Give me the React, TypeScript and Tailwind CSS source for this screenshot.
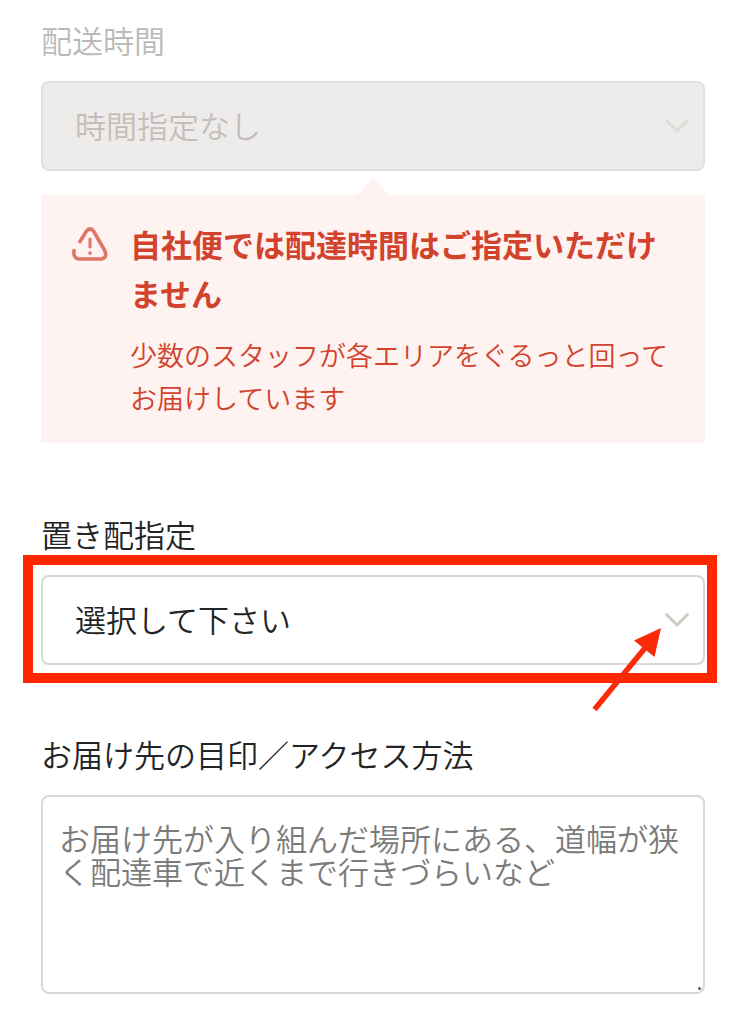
import type { ReactNode, SelectHTMLAttributes } from "react"

function Chevron({ className }: { className: string }) {
  return (
    <svg viewBox="0 0 28 18" className={`pointer-events-none absolute top-1/2 right-[14px] h-[18px] w-7 -translate-y-1/2 ${className}`} aria-hidden="true">
      <path d="M3.5 3.5 L14 14 L24.5 3.5" fill="none" stroke="currentColor" strokeWidth="3" strokeLinecap="round" strokeLinejoin="round" />
    </svg>
  )
}

function FieldLabel({ htmlFor, className = "", children }: { htmlFor: string; className?: string; children: ReactNode }) {
  return (
    <label htmlFor={htmlFor} className={`mb-5 block text-[31px] leading-[42px] font-[350] ${className}`}>
      {children}
    </label>
  )
}

function SelectBox({ option, chevron, className, ...props }: { option: string; chevron: string } & SelectHTMLAttributes<HTMLSelectElement>) {
  return (
    <div className="relative">
      <select
        className={`block h-[90px] w-full appearance-none rounded-lg border-2 pr-14 pb-0.5 pl-8 text-[31px] font-[350] opacity-100 ${className}`}
        {...props}
      >
        <option>{option}</option>
      </select>
      <Chevron className={chevron} />
    </div>
  )
}

function WarningIcon() {
  return (
    <svg viewBox="0 0 36 34" className="mt-2 h-[34px] w-9 shrink-0 text-[#e07468]" fill="none" stroke="currentColor" strokeWidth="3.6" strokeLinecap="round" strokeLinejoin="round" aria-hidden="true">
      <path d="M8 14.5 L14.3 4.4 Q18 -0.6 21.7 4.4 L32.7 23.5 Q36 31.5 28.5 32 L7 32 Q1 31.5 2 23.5" />
      <path d="M18 12 V20" strokeWidth="3" />
      <path d="M18 26 V26.2" strokeWidth="3.4" />
    </svg>
  )
}

export default function App() {
  return (
    <main lang="ja" className="bg-white pt-[19px] pr-[29px] pb-[29px] pl-[41px] font-['Noto_Sans_CJK_JP',sans-serif] text-[#222426]">
      {/* Delivery time */}
      <section>
        <FieldLabel htmlFor="delivery-time" className="text-[#bcbab9]">配送時間</FieldLabel>
        <SelectBox
          id="delivery-time"
          option="時間指定なし"
          chevron="text-[#dbded8]"
          className="border-[#e1e0dd] bg-[#eeecea] text-[#c4bebb]"
          disabled
        />

        <div role="alert" className="relative mt-6 flex gap-[22px] bg-[#fef3f1] py-6 pr-6 pl-[31px]">
          <svg viewBox="0 0 32 18" className="absolute bottom-full left-1/2 h-[18px] w-8 -translate-x-1/2 text-[#fef3f1]" aria-hidden="true">
            <path d="M0 18 L16 0 L32 18 Z" fill="currentColor" />
          </svg>
          <WarningIcon />
          <div className="min-w-0 text-[#d2432d]">
            <p className="text-[31px] leading-[49px] font-bold">自社便では配達時間はご指定いただけません</p>
            <p className="mt-4 text-[27px] leading-[43px] font-[350]">少数のスタッフが各エリアをぐるっと回ってお届けしています</p>
          </div>
        </div>
      </section>

      {/* Drop-off place */}
      <section className="mt-[70px]">
        <FieldLabel htmlFor="drop-off">置き配指定</FieldLabel>
        <div className="relative">
          <SelectBox id="drop-off" option="選択して下さい" chevron="text-[#c8cdc2]" className="border-[#d8d8d7] bg-white" />
          {/* Highlight frame and pointer */}
          <div className="pointer-events-none absolute -top-5 -right-3 -bottom-[18px] -left-[18px] border-10 border-[#ff2600]" />
          <svg viewBox="0 0 70 84" className="pointer-events-none absolute top-[53px] right-[43px] h-[84px] w-[70px] text-[#fb2a0a]" aria-hidden="true">
            <path d="M2.5 81.5 L53 20" fill="none" stroke="currentColor" strokeWidth="5.5" />
            <path d="M69 0 L42 12.5 L62.5 29 Z" fill="currentColor" />
          </svg>
        </div>
      </section>

      {/* Access notes */}
      <section className="mt-[68px]">
        <FieldLabel htmlFor="access-notes">お届け先の目印／アクセス方法</FieldLabel>
        <div className="relative">
          <textarea
            id="access-notes"
            placeholder="お届け先が入り組んだ場所にある、道幅が狭く配達車で近くまで行きづらいなど"
            className="block h-[199px] w-full resize-none rounded-lg border-2 border-[#d8d8d7] bg-white py-6 pr-4 pl-4 text-[31px] leading-[33px] font-[350] placeholder:text-[#7b7b7b]"
          />
          <span className="pointer-events-none absolute right-1 bottom-1 size-[3px] rounded-full bg-[#555555]" />
        </div>
      </section>
    </main>
  )
}
